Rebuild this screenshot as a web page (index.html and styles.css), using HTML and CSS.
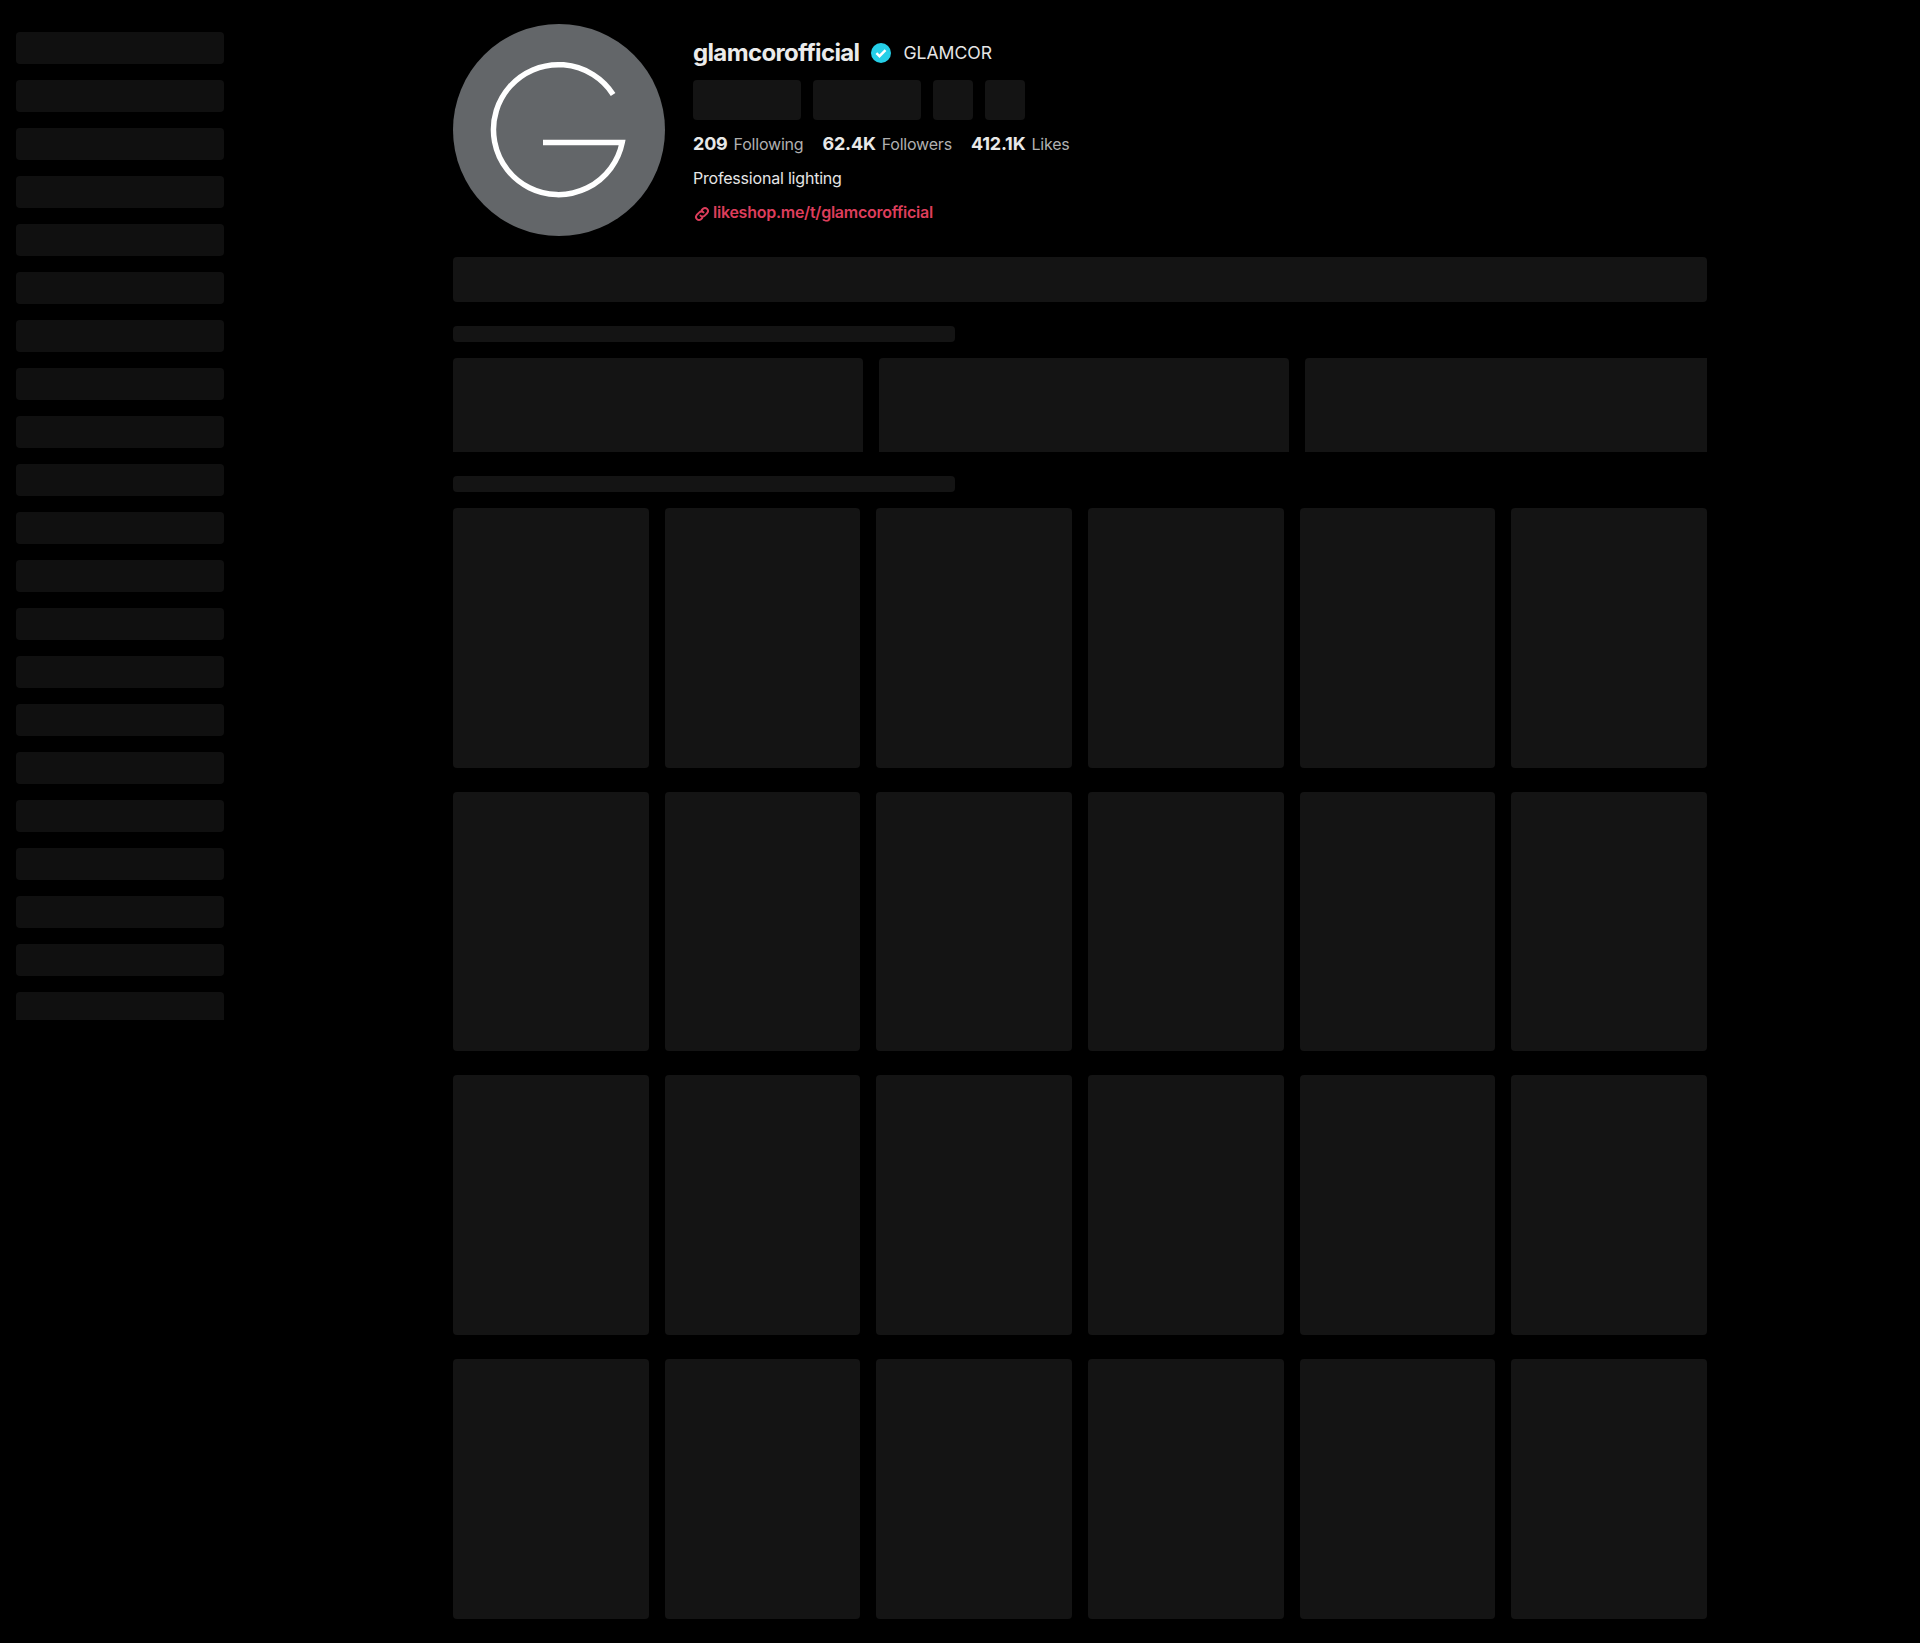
FILE: index.html
```html
<!DOCTYPE html>
<html lang="en">
<head>
    <meta charset="UTF-8">
    <title>glamcorofficial</title>
    <link rel="stylesheet" href="styles.css">
</head>
<body>
    <div class="page">
        <aside class="sidebar">
            <div class="sidebar-list">
                <div class="skel side-item"></div>
                <div class="skel side-item"></div>
                <div class="skel side-item"></div>
                <div class="skel side-item"></div>
                <div class="skel side-item"></div>
                <div class="skel side-item"></div>
                <div class="skel side-item"></div>
                <div class="skel side-item"></div>
                <div class="skel side-item"></div>
                <div class="skel side-item"></div>
                <div class="skel side-item"></div>
                <div class="skel side-item"></div>
                <div class="skel side-item"></div>
                <div class="skel side-item"></div>
                <div class="skel side-item"></div>
                <div class="skel side-item"></div>
                <div class="skel side-item"></div>
                <div class="skel side-item"></div>
                <div class="skel side-item"></div>
                <div class="skel side-item"></div>
                <div class="skel side-item"></div>
            </div>
        </aside>

        <main class="main">
            <header class="profile">
                <div class="avatar">
                    <svg class="avatar-logo" viewBox="0 0 212 212">
                        <path d="M160.1 70.4A65 65 0 1 0 169.2 118.5H90" fill="none" stroke="#fff" stroke-width="5.5" stroke-miterlimit="10"/>
                    </svg>
                </div>
                <div class="info">
                    <div class="title-row">
                        <h1 class="username">glamcorofficial</h1>
                        <svg class="badge" viewBox="0 0 20 20">
                            <circle cx="10" cy="10" r="10" fill="#25cfe8"/>
                            <path d="M5.4 10.2l3.1 3 6-6" fill="none" stroke="#fff" stroke-width="2.4"/>
                        </svg>
                        <span class="nickname">GLAMCOR</span>
                    </div>
                    <div class="actions">
                        <div class="skel btn-wide"></div>
                        <div class="skel btn-wide"></div>
                        <div class="skel btn-square"></div>
                        <div class="skel btn-square"></div>
                    </div>
                    <div class="stats">
                        <div class="stat"><strong>209</strong><span>Following</span></div>
                        <div class="stat"><strong>62.4K</strong><span>Followers</span></div>
                        <div class="stat"><strong>412.1K</strong><span>Likes</span></div>
                    </div>
                    <p class="bio">Professional lighting</p>
                    <a class="link" href="#">
                        <svg class="link-icon" viewBox="0 0 16 16">
                            <path d="M6.6 9.4a2.7 2.7 0 0 0 3.8 0l2.3-2.3a2.7 2.7 0 0 0-3.8-3.8L7.8 4.4M9.4 6.6a2.7 2.7 0 0 0-3.8 0L3.3 8.9a2.7 2.7 0 0 0 3.8 3.8l1.1-1.1" fill="none" stroke="currentColor" stroke-width="1.7" stroke-linecap="round"/>
                        </svg>
                        likeshop.me/t/glamcorofficial
                    </a>
                </div>
            </header>

            <div class="skel tab-bar"></div>

            <div class="skel heading"></div>
            <div class="playlists">
                <div class="skel playlist"></div>
                <div class="skel playlist"></div>
                <div class="skel playlist"></div>
            </div>

            <div class="skel heading"></div>
            <div class="grid">
                <div class="skel video"></div>
                <div class="skel video"></div>
                <div class="skel video"></div>
                <div class="skel video"></div>
                <div class="skel video"></div>
                <div class="skel video"></div>
                <div class="skel video"></div>
                <div class="skel video"></div>
                <div class="skel video"></div>
                <div class="skel video"></div>
                <div class="skel video"></div>
                <div class="skel video"></div>
                <div class="skel video"></div>
                <div class="skel video"></div>
                <div class="skel video"></div>
                <div class="skel video"></div>
                <div class="skel video"></div>
                <div class="skel video"></div>
                <div class="skel video"></div>
                <div class="skel video"></div>
                <div class="skel video"></div>
                <div class="skel video"></div>
                <div class="skel video"></div>
                <div class="skel video"></div>
            </div>
        </main>
    </div>
</body>
</html>
```

FILE: styles.css
```css
* {
    box-sizing: border-box;
}

body {
    margin: 0;
    background: #000;
    color: #fff;
    font-family: Inter, "Liberation Sans", sans-serif;
}

.page {
    display: flex;
    height: 1643px;
    overflow: hidden;
}

.skel {
    background: #141414;
    border-radius: 4px;
}

/* sidebar */
.sidebar {
    width: 453px;
    flex: none;
    padding: 32px 0 0 16px;
}

.sidebar-list {
    display: flex;
    flex-direction: column;
    gap: 16px;
    width: 208px;
    height: 988px;
    overflow: hidden;
}

.side-item {
    flex: none;
    height: 32px;
    background: #101010;
}

/* main column */
.main {
    width: 1254px;
    flex: none;
    padding-top: 24px;
}

.profile {
    display: flex;
    gap: 28px;
    height: 233px;
}

.avatar {
    width: 212px;
    height: 212px;
    flex: none;
    border-radius: 50%;
    background: #636669;
}

.avatar-logo {
    display: block;
    width: 212px;
    height: 212px;
}

.info {
    flex: 1;
}

.title-row {
    display: flex;
    align-items: center;
    height: 32px;
    margin-top: 13px;
}

.username {
    margin: 0 0 2px;
    font-size: 24px;
    font-weight: 700;
    letter-spacing: -0.65px;
    color: #ebebeb;
}

.badge {
    width: 20px;
    height: 20px;
    margin: 0 12px;
}

.nickname {
    margin-bottom: 2px;
    font-size: 17.6px;
    font-weight: 400;
    color: #e6e6e6;
}

.actions {
    display: flex;
    gap: 12px;
    margin-top: 11px;
}

.btn-wide {
    width: 108px;
    height: 40px;
}

.btn-square {
    width: 40px;
    height: 40px;
}

.stats {
    display: flex;
    gap: 19px;
    margin-top: 11px;
    height: 24px;
    align-items: center;
}

.stat {
    display: flex;
    align-items: baseline;
    gap: 6px;
    font-size: 16px;
    letter-spacing: -0.2px;
    color: #b0b0b0;
}

.stat strong {
    font-size: 18px;
    font-weight: 700;
    color: #e8e8e8;
}

.bio {
    margin: 11px 0 0;
    font-size: 16px;
    line-height: 24px;
    letter-spacing: -0.2px;
    color: #e6e6e6;
}

.link {
    display: flex;
    align-items: center;
    gap: 2px;
    margin-top: 10px;
    font-size: 16px;
    font-weight: 600;
    line-height: 24px;
    letter-spacing: -0.25px;
    color: #dd3d5b;
    text-decoration: none;
}

.link-icon {
    width: 18px;
    height: 18px;
    margin-top: 3px;
}

.tab-bar {
    height: 45px;
}

.heading {
    width: 40%;
    height: 16px;
}

.tab-bar + .heading {
    margin-top: 24px;
}

.playlists {
    display: flex;
    gap: 16px;
    height: 94px;
    margin: 16px 0 24px;
    overflow: hidden;
}

.playlist {
    flex: none;
    width: 410px;
    height: 120px;
}

.grid {
    display: grid;
    grid-template-columns: repeat(6, 1fr);
    gap: 24px 16px;
    margin-top: 16px;
}

.video {
    height: 259.67px;
}
```
